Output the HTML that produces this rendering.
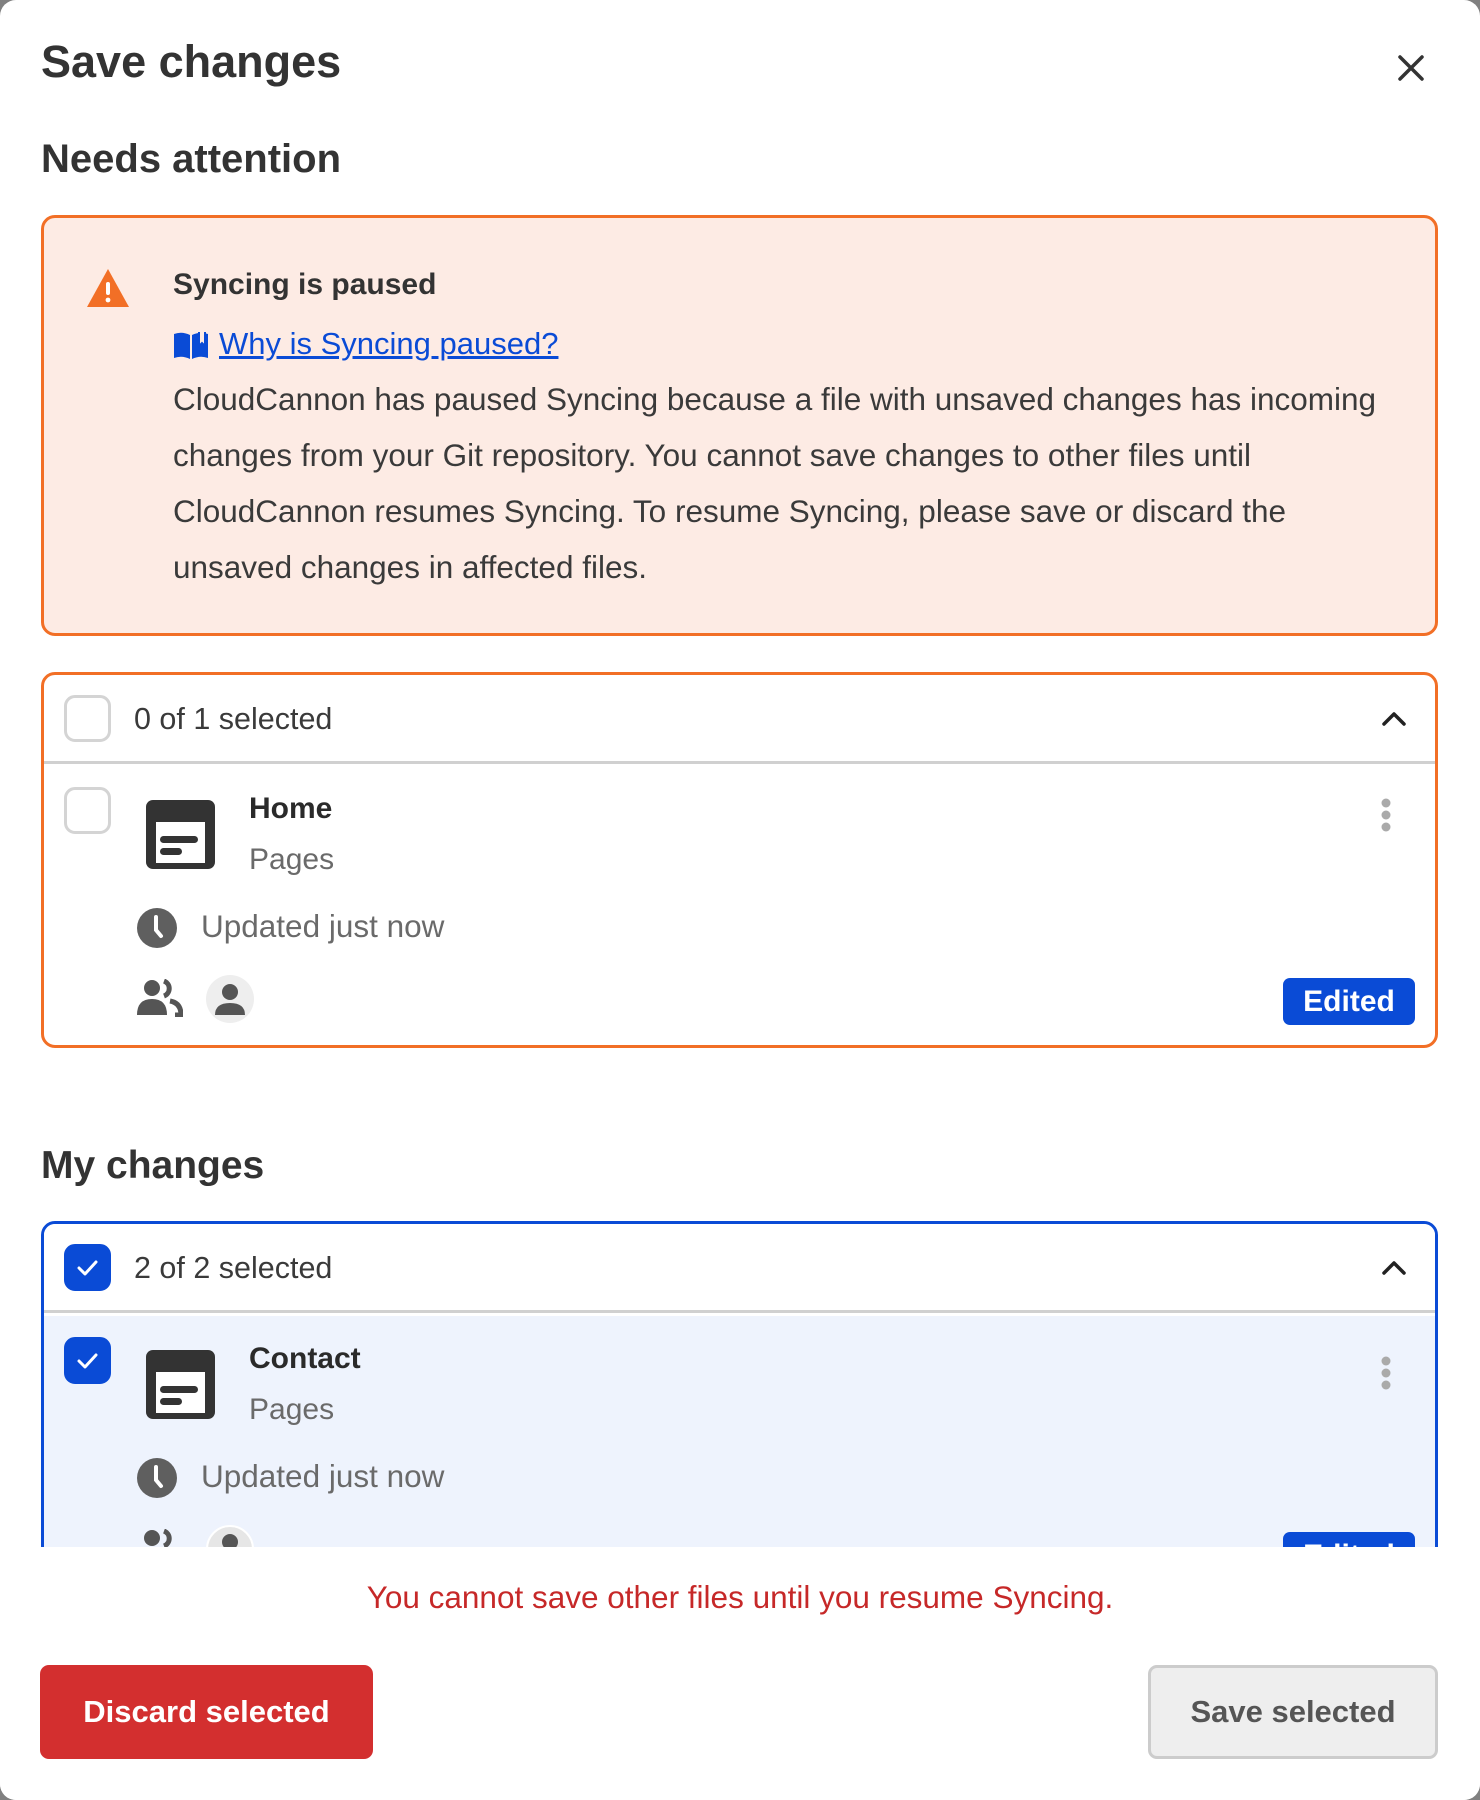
<!DOCTYPE html>
<html><head><meta charset="utf-8"><style>
*{box-sizing:border-box;margin:0;padding:0}
html,body{width:1480px;height:1800px;overflow:hidden;background:#808080}
body{font-family:"Liberation Sans",sans-serif;color:#333}
.dlg{position:absolute;left:0;top:0;width:1480px;height:1800px;background:#fff;border-radius:16px;overflow:hidden}
.a{position:absolute;white-space:nowrap}
h1{position:absolute;left:41px;top:36px;font-size:45px;font-weight:bold;color:#333}
h2{position:absolute;left:41px;font-weight:bold;color:#333}
.warn{position:absolute;left:41px;top:215px;width:1397px;height:421px;border:3px solid #f26f26;border-radius:14px;background:#fdebe4}
.body{position:absolute;left:129px;top:153px;font-size:31.5px;line-height:56px;color:#3a3a3a;white-space:nowrap}
.box{position:absolute;left:41px;width:1397px;border:3px solid;border-radius:14px;overflow:hidden;background:#fff}
.cb{position:absolute;width:47px;height:47px;border:3px solid #d4d4d4;border-radius:11px;background:#fff}
.cb.on{background:#0a4bd6;border-color:#0a4bd6}
.hdr{position:absolute;left:0;top:0;right:0;height:89px;border-bottom:3px solid #d0d0d0}
.lbl{position:absolute;left:90px;font-size:30.5px;color:#3a3a3a}
.name{position:absolute;left:205px;font-size:30px;font-weight:bold;color:#2a2a2a}
.sub{position:absolute;left:205px;font-size:30px;color:#6a6a6a}
.badge{position:absolute;width:132px;height:47px;background:#0a4bd6;color:#fff;border-radius:7px;font-size:30px;font-weight:bold;text-align:center;line-height:47px}
.btn{position:absolute;top:1665px;height:94px;border-radius:9px;font-size:31px;font-weight:bold;text-align:center;line-height:88px}
</style></head><body><div class="dlg">
<h1>Save changes</h1>
<svg class="a" style="left:1397px;top:54px" width="28" height="28" viewBox="0 0 28 28"><path d="M3 3L25 25M25 3L3 25" stroke="#333" stroke-width="3.5" stroke-linecap="round"/></svg>
<h2 style="top:137px;font-size:40px">Needs attention</h2>
<div class="warn">
<svg class="a" style="left:42px;top:50px" width="44" height="40" viewBox="0 0 44 40"><path d="M22 1L43 39H1Z" fill="#f26f26"/><rect x="20" y="14" width="4" height="13" rx="2" fill="#fff"/><circle cx="22" cy="32" r="2.4" fill="#fff"/></svg>
<div class="a" style="left:129px;top:50px;font-size:30px;font-weight:bold;color:#333">Syncing is paused</div>
<svg class="a" style="left:129px;top:112px" width="36" height="30" viewBox="0 0 36 30"><path d="M1 4Q9 1 17 5V29Q9 25 1 28Z" fill="#0a4bd6"/><path d="M19 5Q27 1 35 4V28Q27 25 19 29Z" fill="#0a4bd6"/><path d="M26 2V16L29 13L32 16V2" fill="#fdebe4" stroke="#0a4bd6" stroke-width="2"/></svg>
<div class="a" style="left:175px;top:108px;font-size:31px;color:#0a4bd6;text-decoration:underline">Why is Syncing paused?</div>
<div class="body">CloudCannon has paused Syncing because a file with unsaved changes has incoming<br>changes from your Git repository. You cannot save changes to other files until<br>CloudCannon resumes Syncing. To resume Syncing, please save or discard the<br>unsaved changes in affected files.</div>
</div>

<div class="box" style="top:672px;height:376px;border-color:#f26f26">
<div class="hdr"><div class="cb" style="left:20px;top:20px"></div><div class="lbl" style="top:27px">0 of 1 selected</div>
<svg class="a" style="left:1337px;top:36px" width="26" height="16" viewBox="0 0 26 16"><path d="M3 13L13 3L23 13" fill="none" stroke="#222" stroke-width="3.5" stroke-linecap="round" stroke-linejoin="round"/></svg></div>
<div class="cb" style="left:20px;top:112px"></div>
<svg class="a" style="left:100px;top:123px" width="73" height="73" viewBox="0 0 73 73"><rect x="2" y="2" width="69" height="69" rx="7" fill="#333"/><rect x="12" y="24" width="49" height="41" fill="#fff"/><rect x="16" y="38" width="38" height="7" rx="3.5" fill="#333"/><rect x="16" y="50" width="22" height="7" rx="3.5" fill="#333"/></svg>
<div class="name" style="top:117px">Home</div>
<div class="sub" style="top:168px">Pages</div>
<svg class="a" style="left:92px;top:232px" width="42" height="42" viewBox="0 0 42 42"><circle cx="21" cy="21" r="20" fill="#5f5f5f"/><path d="M20 10V23L25 29" fill="none" stroke="#fff" stroke-width="4" stroke-linecap="round"/></svg>
<div class="sub" style="left:157px;top:233px;font-size:31.5px">Updated just now</div>
<svg class="a" style="left:93px;top:304px" width="46" height="38" viewBox="0 0 46 38"><circle cx="15" cy="9" r="8" fill="#555"/><path d="M0 36Q0 20 15 20Q30 20 30 36Z" fill="#555"/><path d="M27 2A8 8 0 0 1 27 17" fill="none" stroke="#555" stroke-width="5"/><path d="M33 22Q44 24 44 36H38" fill="none" stroke="#555" stroke-width="5"/></svg>
<div class="a" style="left:162px;top:300px;width:48px;height:48px;border-radius:50%;background:#eee"><svg width="48" height="48" viewBox="0 0 48 48"><circle cx="24" cy="17" r="8" fill="#555"/><path d="M9 40Q9 28 24 28Q39 28 39 40Z" fill="#555"/></svg></div>
<svg class="a" style="left:1336px;top:122px" width="12" height="38" viewBox="0 0 12 38"><circle cx="6" cy="6" r="4.5" fill="#aaa"/><circle cx="6" cy="18" r="4.5" fill="#aaa"/><circle cx="6" cy="30" r="4.5" fill="#aaa"/></svg>
<div class="badge" style="left:1239px;top:303px">Edited</div>
</div>

<h2 style="top:1144px;font-size:39px">My changes</h2>
<div class="box" style="top:1221px;height:400px;border-color:#0a4bd6">
<div class="hdr" style="background:#fff"><div class="cb on" style="left:20px;top:20px"><svg width="41" height="41" viewBox="0 0 41 41"><path d="M12 21L18 27L29 15" fill="none" stroke="#fff" stroke-width="3" stroke-linecap="round" stroke-linejoin="round"/></svg></div><div class="lbl" style="top:27px">2 of 2 selected</div>
<svg class="a" style="left:1337px;top:36px" width="26" height="16" viewBox="0 0 26 16"><path d="M3 13L13 3L23 13" fill="none" stroke="#222" stroke-width="3.5" stroke-linecap="round" stroke-linejoin="round"/></svg></div>
<div class="a" style="left:0;top:92px;right:0;bottom:0;background:#eef3fd"></div>
<div class="cb on" style="left:20px;top:113px"><svg width="41" height="41" viewBox="0 0 41 41"><path d="M12 21L18 27L29 15" fill="none" stroke="#fff" stroke-width="3" stroke-linecap="round" stroke-linejoin="round"/></svg></div>
<svg class="a" style="left:100px;top:124px" width="73" height="73" viewBox="0 0 73 73"><rect x="2" y="2" width="69" height="69" rx="7" fill="#333"/><rect x="12" y="24" width="49" height="41" fill="#fff"/><rect x="16" y="38" width="38" height="7" rx="3.5" fill="#333"/><rect x="16" y="50" width="22" height="7" rx="3.5" fill="#333"/></svg>
<div class="name" style="top:118px">Contact</div>
<div class="sub" style="top:169px">Pages</div>
<svg class="a" style="left:92px;top:233px" width="42" height="42" viewBox="0 0 42 42"><circle cx="21" cy="21" r="20" fill="#5f5f5f"/><path d="M20 10V23L25 29" fill="none" stroke="#fff" stroke-width="4" stroke-linecap="round"/></svg>
<div class="sub" style="left:157px;top:234px;font-size:31.5px">Updated just now</div>
<svg class="a" style="left:93px;top:305px" width="46" height="38" viewBox="0 0 46 38"><circle cx="15" cy="9" r="8" fill="#555"/><path d="M0 36Q0 20 15 20Q30 20 30 36Z" fill="#555"/><path d="M27 2A8 8 0 0 1 27 17" fill="none" stroke="#555" stroke-width="5"/><path d="M33 22Q44 24 44 36H38" fill="none" stroke="#555" stroke-width="5"/></svg>
<div class="a" style="left:162px;top:301px;width:48px;height:48px;border-radius:50%;background:#e6e6e6;border:2px solid #fff"><svg width="44" height="44" viewBox="0 0 44 44"><circle cx="22" cy="15" r="8" fill="#555"/></svg></div>
<svg class="a" style="left:1336px;top:131px" width="12" height="38" viewBox="0 0 12 38"><circle cx="6" cy="6" r="4.5" fill="#aaa"/><circle cx="6" cy="18" r="4.5" fill="#aaa"/><circle cx="6" cy="30" r="4.5" fill="#aaa"/></svg>
<div class="badge" style="left:1239px;top:308px">Edited</div>
</div>

<div class="a" style="left:0;top:1547px;width:1480px;height:253px;background:#fff"></div>
<div class="a" style="left:0;width:1480px;top:1579px;text-align:center;font-size:31.5px;color:#c62828">You cannot save other files until you resume Syncing.</div>
<div class="btn" style="left:40px;width:333px;background:#d32f2f;color:#fff;line-height:94px">Discard selected</div>
<div class="btn" style="left:1148px;width:290px;background:#eee;border:3px solid #ccc;color:#555">Save selected</div>
</div></body></html>
